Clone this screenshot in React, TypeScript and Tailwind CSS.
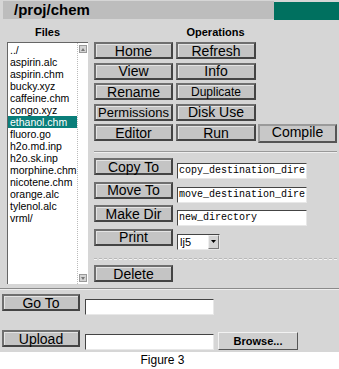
import React from 'react';

const files = [
  '../',
  'aspirin.alc',
  'aspirin.chm',
  'bucky.xyz',
  'caffeine.chm',
  'congo.xyz',
  'ethanol.chm',
  'fluoro.go',
  'h2o.md.inp',
  'h2o.sk.inp',
  'morphine.chm',
  'nicotene.chm',
  'orange.alc',
  'tylenol.alc',
  'vrml/',
];

function Btn({ children, className = '' }: { children: React.ReactNode; className?: string }) {
  return (
    <button
      type="button"
      className={`h-[17px] bg-[#c4c4c4] border-2 border-t-[#6f6f6f] border-l-[#6f6f6f] border-b-[#444] border-r-[#444] shadow-[inset_1px_1px_0_#e4e4e4] text-black leading-none flex items-center justify-center p-0 ${className}`}
    >
      {children}
    </button>
  );
}

function Field({ value, className = '' }: { value: string; className?: string }) {
  return (
    <div
      className={`h-[16px] bg-white border border-t-[#444] border-l-[#444] border-b-[#e8e8e8] border-r-[#e8e8e8] font-['Liberation_Mono',monospace] text-[10px] leading-[14px] pl-[1px] overflow-hidden whitespace-nowrap ${className}`}
    >
      {value}
    </div>
  );
}

function Arrow({ up }: { up?: boolean }) {
  return (
    <div className="w-[8px] h-[8px] bg-[#d4d4d4] border border-[#9a9a9a] flex items-center justify-center">
      <svg width="4" height="3" viewBox="0 0 4 3">
        {up ? <path d="M2 0 L4 3 L0 3 Z" fill="#777" /> : <path d="M0 0 L4 0 L2 3 Z" fill="#777" />}
      </svg>
    </div>
  );
}

export default function App() {
  return (
    <div className="w-[339px] h-[369px] bg-white font-['Liberation_Sans',Arial,sans-serif] text-black overflow-hidden">
      <div className="h-[352px] bg-[#d6d6d6] flex flex-col">
        {/* header */}
        <div className="flex pt-[1px] h-[20px] shrink-0">
          <div className="ml-[3px] w-[271px] h-[18px] bg-[#bdbdbd] pl-[11px] text-[15px] font-bold leading-[18px]">
            /proj/chem
          </div>
          <div className="ml-auto mt-[1px] w-[65px] h-[18px] bg-[#00705f]" />
        </div>

        <div className="flex shrink-0">
          {/* files */}
          <div className="ml-[7px] w-[81px] flex flex-col">
            <div className="h-[22px] text-[11px] font-bold text-center leading-[22px] pt-[1px]">Files</div>
            <div className="h-[242px] bg-white border-t border-l border-t-[#666] border-l-[#666] flex">
              <div className="flex-1 pt-[1px]">
                {files.map((f) => (
                  <div
                    key={f}
                    className={`h-[12px] pl-[2px] text-[10.5px] leading-[12px] ${f === 'ethanol.chm' ? 'bg-[#0a7e7a] text-white' : ''}`}
                  >
                    {f}
                  </div>
                ))}
              </div>
              <div className="w-[11px] border-l border-dotted border-[#bbb] flex flex-col justify-between items-center py-[2px]">
                <Arrow up />
                <Arrow />
              </div>
            </div>
          </div>

          {/* operations */}
          <div className="ml-[6px] w-[243px] flex flex-col">
            <div className="h-[22px] text-[11px] font-bold text-center leading-[22px] pt-[1px]">Operations</div>
            <div className="flex flex-col gap-[3.5px]">
              <div className="flex gap-[3px]">
                <Btn className="w-[79px] text-[14px]">Home</Btn>
                <Btn className="w-[80px] text-[14px]">Refresh</Btn>
              </div>
              <div className="flex gap-[3px]">
                <Btn className="w-[79px] text-[14px]">View</Btn>
                <Btn className="w-[80px] text-[14px]">Info</Btn>
              </div>
              <div className="flex gap-[3px]">
                <Btn className="w-[79px] text-[14px]">Rename</Btn>
                <Btn className="w-[80px] text-[12px]">Duplicate</Btn>
              </div>
              <div className="flex gap-[3px]">
                <Btn className="w-[79px] text-[13px]">Permissions</Btn>
                <Btn className="w-[80px] text-[14px]">Disk Use</Btn>
              </div>
              <div className="flex gap-[3px] items-start">
                <Btn className="w-[79px] text-[14px]">Editor</Btn>
                <Btn className="w-[80px] text-[14px]">Run</Btn>
                <button
                  type="button"
                  className="ml-[-1px] w-[79px] h-[19px] bg-[#c8c8c8] border-2 border-t-[#9a9a9a] border-l-[#9a9a9a] border-b-[#555] border-r-[#555] text-[14px] leading-[14px] pb-[3px] flex items-center justify-center"
                >
                  Compile
                </button>
              </div>
            </div>

            <div className="mt-[8px] h-[2px] border-t border-t-[#999] border-b border-b-[#eee]" />

            <div className="mt-[5px] flex flex-col">
              <div className="h-[23.5px] flex items-start">
                <Btn className="w-[79px] text-[14px]">Copy To</Btn>
                <Field value="copy_destination_dire" className="ml-[4px] mt-[5px] w-[130px]" />
              </div>
              <div className="h-[23.5px] flex items-start">
                <Btn className="w-[79px] text-[14px]">Move To</Btn>
                <Field value="move_destination_dire" className="ml-[4px] mt-[5px] w-[130px]" />
              </div>
              <div className="h-[23.5px] flex items-start">
                <Btn className="w-[79px] text-[14px]">Make Dir</Btn>
                <Field value="new_directory" className="ml-[4px] mt-[5px] w-[130px]" />
              </div>
              <div className="h-[23.5px] flex items-start">
                <Btn className="w-[79px] text-[14px]">Print</Btn>
                <div className="ml-[4px] mt-[5px] w-[43px] h-[16px] bg-white border border-t-[#444] border-l-[#444] border-b-[#e8e8e8] border-r-[#e8e8e8] flex">
                  <div className="flex-1 text-[11px] leading-[14px] pl-[2px]">lj5</div>
                  <div className="w-[11px] bg-[#d4d4d4] border border-t-[#eee] border-l-[#eee] border-b-[#777] border-r-[#777] flex items-center justify-center">
                    <svg width="5" height="3" viewBox="0 0 5 3">
                      <path d="M0 0 L5 0 L2.5 3 Z" fill="#000" />
                    </svg>
                  </div>
                </div>
              </div>
            </div>

            <div className="mt-[6px] h-[2px] border-t border-dashed border-t-[#b8b8b8] border-b border-b-[#f4f4f4]" />

            <div className="mt-[5px]">
              <Btn className="w-[79px] text-[14px]">Delete</Btn>
            </div>
          </div>
        </div>

        <div className="mt-[4px] h-[2px] shrink-0 border-t border-t-[#8a8a8a] border-b border-b-[#eee]" />

        <div className="mt-[4px] ml-[2px] flex items-start shrink-0">
          <Btn className="w-[78px] text-[14px]">Go To</Btn>
          <Field value="" className="ml-[5px] mt-[5px] w-[129px]" />
        </div>

        <div className="mt-[15px] ml-[2px] flex items-start shrink-0">
          <Btn className="w-[78px] text-[14px]">Upload</Btn>
          <Field value="" className="ml-[5px] mt-[4px] w-[129px]" />
          <button
            type="button"
            className="ml-[4px] mt-[2px] w-[80px] h-[18px] bg-[#cfcfcf] border border-t-[#f2f2f2] border-l-[#f2f2f2] border-b-[#555] border-r-[#555] text-[11px] font-bold leading-none flex items-center justify-center"
          >
            Browse...
          </button>
        </div>
      </div>
      <div className="text-center text-[12px] leading-[14px] pr-[14px] pt-[1px]">Figure 3</div>
    </div>
  );
}
